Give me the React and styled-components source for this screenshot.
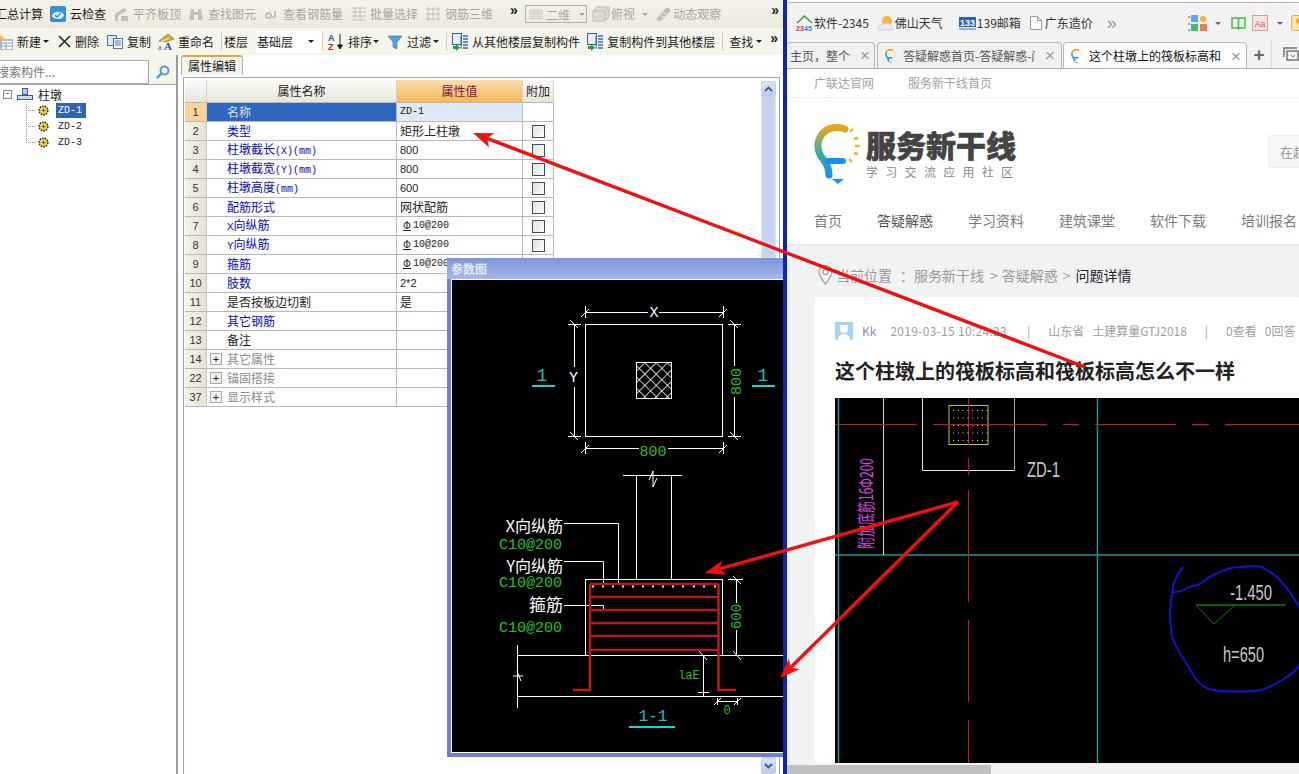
import React from 'react';
import styled, { createGlobalStyle } from 'styled-components';

const cjk = '"Noto Sans CJK SC", "Liberation Sans", sans-serif';
const mono = '"Liberation Mono", "Noto Sans CJK SC", monospace';
const sans = '"Liberation Sans", sans-serif';

const GlobalStyle = createGlobalStyle`
  html, body { margin: 0; padding: 0; background: #fff; overflow: hidden; }
  * { box-sizing: border-box; }
  body { font-family: ${cjk}; font-size: 12px; color: #222; }
  svg { flex: none; }
`;

const Page = styled.div`
  position: relative;
  display: flex;
  width: 1299px;
  height: 774px;
  overflow: hidden;
`;

/* ---------- left: the desktop program ---------- */

const AppWindow = styled.div`
  position: relative;
  width: 783px;
  height: 774px;
  flex: none;
  display: flex;
  flex-direction: column;
  overflow: hidden;
  background: #fff;
`;

const Divider = styled.div`
  width: 4px;
  flex: none;
  background: #0b27a6;
`;

const ToolRow = styled.div`
  display: flex;
  align-items: center;
  height: ${(p) => p.$h}px;
  flex: none;
  background: ${(p) => p.$bg};
  white-space: nowrap;
  overflow: hidden;
`;

const ToolItem = styled.div`
  display: flex;
  align-items: center;
  flex: none;
  gap: ${(p) => (p.$gap === undefined ? 4 : p.$gap)}px;
  margin-left: ${(p) => p.$ml || 0}px;
  color: ${(p) => (p.$off ? '#a9a79c' : '#1c1c1c')};
  line-height: 1;
`;

const Caret = styled.span`
  width: 0;
  height: 0;
  flex: none;
  margin-left: ${(p) => p.$ml || 0}px;
  border-left: 3px solid transparent;
  border-right: 3px solid transparent;
  border-top: 3px solid ${(p) => p.$c || '#222'};
`;

const More = styled.span`
  flex: none;
  width: 10px;
  margin-left: ${(p) => p.$ml || 0}px;
  margin-top: ${(p) => (p.$flat ? 0 : -8)}px;
  font: bold ${(p) => (p.$flat ? 18 : 14)}px/1 ${sans};
  color: ${(p) => (p.$flat ? '#999' : '#222')};
  font-weight: ${(p) => (p.$flat ? 400 : 700)};
`;

const ToolSep = styled.span`
  width: 1px;
  height: 18px;
  flex: none;
  margin-left: ${(p) => p.$ml || 0}px;
  background: #cfccbd;
`;

const ViewSelect = styled.div`
  display: flex;
  align-items: center;
  flex: none;
  width: 62px;
  height: 18px;
  margin-left: ${(p) => p.$ml || 0}px;
  padding-left: 3px;
  border: 1px solid #b5b3a8;
  color: #a9a79c;
  gap: 3px;
`;

const FloorSelect = styled.div`
  display: flex;
  align-items: center;
  flex: none;
  width: 66px;
  height: 22px;
  margin-left: ${(p) => p.$ml || 0}px;
  padding-left: 1px;
  background: #fff;
  justify-content: space-between;
  padding-right: 8px;
`;

const AppBody = styled.div`
  flex: 1;
  min-height: 0;
  display: flex;
`;

const TreePane = styled.div`
  width: 178px;
  flex: none;
  display: flex;
  flex-direction: column;
  border-right: 2px solid #9c9c94;
  background: #fff;
`;

const SearchRow = styled.div`
  display: flex;
  height: 30px;
  padding-top: 5px;
  background: #f6f5ec;
  border-bottom: 1px solid #a9a9a0;
`;

const SearchInput = styled.div`
  width: 150px;
  height: 24px;
  margin-left: -1px;
  border: 1px solid #a4abb5;
  background: #fff;
  color: #777;
  text-indent: -3px;
  line-height: 22px;
  overflow: hidden;
`;

const SearchButton = styled.div`
  flex: 1;
  display: flex;
  align-items: center;
  justify-content: center;
`;

const Tree = styled.div`
  padding-top: 1px;
`;

const TreeRoot = styled.div`
  display: flex;
  align-items: center;
  height: 16px;
  padding-left: 3px;
  gap: 5px;
`;

const Expander = styled.span`
  display: flex;
  align-items: center;
  justify-content: center;
  width: 9px;
  height: 9px;
  flex: none;
  border: 1px solid #888;
  background: #fff;
  font: 9px/1 ${mono};
  color: #222;
`;

const TreeLeaf = styled.div`
  display: flex;
  align-items: center;
  height: 16px;
  padding-left: 38px;
  gap: 7px;
  background-image:
    repeating-linear-gradient(to right, #999 0 1px, transparent 1px 2px),
    repeating-linear-gradient(to bottom, #999 0 1px, transparent 1px 2px);
  background-size: 10px 1px, 1px ${(p) => (p.$last ? '50%' : '100%')};
  background-position: 26px 50%, 26px 0;
  background-repeat: no-repeat;
`;

const LeafLabel = styled.span`
  padding: 1px 2px;
  font: 10px/13px ${mono};
  color: ${(p) => (p.$sel ? '#fff' : '#222')};
  background: ${(p) => (p.$sel ? '#3163b5' : 'transparent')};
  width: 30px;
`;

const PropsPane = styled.div`
  flex: 1;
  min-width: 0;
  display: flex;
  flex-direction: column;
  padding: 0 3px;
`;

const TabStrip = styled.div`
  display: flex;
  height: 23px;
  flex: none;
  margin-left: 2px;
  border-bottom: 1px solid #9aa6b5;
`;

const PaneTab = styled.div`
  width: 62px;
  height: 20px;
  margin-left: -2px;
  display: flex;
  align-items: center;
  justify-content: center;
  background: #f5f4ec;
  border: 1px solid #b5b3a8;
  border-top: 2px solid #e8a33d;
  border-bottom: none;
  border-radius: 3px 3px 0 0;
  line-height: 1;
`;

const PropsFrame = styled.div`
  flex: 1;
  min-height: 0;
  display: flex;
  justify-content: space-between;
  margin-left: 2px;
  padding-left: 1px;
  border-left: 1px solid #9aa6b5;
  border-right: 1px solid #9aa6b5;
`;

const PropGrid = styled.div`
  display: grid;
  grid-template-columns: 22px 190px 126px 31px;
  grid-template-rows: 23px repeat(16, 19px);
  align-self: flex-start;
  margin-top: 2px;
`;

const HeadCell = styled.div`
  display: flex;
  align-items: center;
  justify-content: center;
  line-height: 1;
  color: ${(p) => (p.$hot ? '#7b1540' : '#222')};
  background: ${(p) =>
    p.$hot
      ? 'linear-gradient(#f9dfae, #f3b65c)'
      : 'linear-gradient(#fbfbf6, #e8e5d8)'};
  border-right: 1px solid #d6d3c5;
  border-bottom: 1px solid #b9b9b0;
`;

const NumCell = styled.div`
  display: flex;
  align-items: center;
  justify-content: center;
  font: 11px/1 ${sans};
  color: #333;
  background: ${(p) =>
    p.$sel ? '#fbd398' : 'linear-gradient(to right, #f6f4ea, #e6e3d5)'};
  border-bottom: 1px solid #b9b9b0;
  border-right: 1px solid #c8c8c0;
`;

const NameCell = styled.div`
  display: flex;
  align-items: center;
  padding-left: ${(p) => (p.$group ? 3 : 20)}px;
  gap: 5px;
  line-height: 1;
  white-space: nowrap;
  color: ${(p) => {
    if (p.$sel) return '#dfe6f5';
    if (p.$kind === 'blue') return '#0808b8';
    if (p.$kind === 'grey') return '#8a8a8a';
    return '#1c1c1c';
  }};
  background: ${(p) => (p.$sel ? '#2f66bf' : '#fff')};
  border-bottom: 1px solid #b9b9b0;
  border-right: 1px solid #b9b9b0;
`;

const ValueCell = styled.div`
  display: flex;
  align-items: center;
  padding-left: 3px;
  line-height: 1;
  white-space: nowrap;
  background: ${(p) => (p.$sel ? '#dfe8f5' : '#fff')};
  border-bottom: 1px solid #b9b9b0;
  border-right: 1px solid #b9b9b0;
`;

const ExtraCell = styled.div`
  display: flex;
  align-items: center;
  justify-content: center;
  border-bottom: 1px solid #b9b9b0;
  border-right: 1px solid #b9b9b0;
`;

const CheckBox = styled.span`
  width: 13px;
  height: 13px;
  border: 1px solid #35506e;
  background: linear-gradient(135deg, #e4e4de, #fbfbf8);
`;

const Mono = styled.span`
  font: ${(p) => p.$size || 10}px/1 ${mono};
`;

const Digits = styled.span`
  font: 11px/1 ${sans};
`;

const GroupBox = styled.span`
  display: flex;
  align-items: center;
  justify-content: center;
  width: 12px;
  height: 12px;
  flex: none;
  border: 1px solid #aaa;
  color: #222;
  background: #f2f1ea;
  font: 11px/1 ${sans};
`;

const VScroll = styled.div`
  width: 15px;
  margin-right: 3px;
  margin-top: 3px;
  display: flex;
  flex-direction: column;
  flex: none;
`;

const ScrollBtn = styled.div`
  height: 16px;
  flex: none;
  display: flex;
  align-items: center;
  justify-content: center;
  background: linear-gradient(#dbe5f6, #b9cbea);
  border: 1px solid #c3d0e6;
  border-radius: 2px;
`;

const ScrollTrack = styled.div`
  flex: 1;
  background: #c6d6f0;
  border-left: 1px solid #dbe5f6;
  border-right: 1px solid #dbe5f6;
`;

/* floating dialog, sits over the property table */
const ParamWindow = styled.div`
  position: absolute;
  left: 447px;
  top: 258px;
  width: 337px;
  height: 499px;
  display: flex;
  flex-direction: column;
  background: #6f81cb;
  padding: 0 0 4px 4px;
`;

const ParamTitle = styled.div`
  height: 21px;
  flex: none;
  display: flex;
  align-items: center;
  font-weight: 700;
  line-height: 1;
  color: #e4e9f8;
  margin-left: -4px;
  padding-left: 4px;
  background: linear-gradient(#7d95d9, #a6b9e8);
`;

const ParamCanvas = styled.div`
  flex: 1;
  min-height: 0;
  background: #000;
  border: 1px solid #fff;
`;

const Drawing = styled.svg`
  display: block;
`;

const CadText = styled.text`
  font-family: ${(p) => (p.$cjk ? cjk : p.$thin ? sans : mono)};
  font-size: ${(p) => p.$size || 15}px;
  fill: ${(p) => p.$c || '#fff'};
  text-anchor: ${(p) => p.$anchor || 'middle'};
`;

/* ---------- right: the browser ---------- */

const Browser = styled.div`
  flex: 1;
  min-width: 0;
  display: flex;
  flex-direction: column;
  overflow: hidden;
  background: #fff;
`;

const BookmarkBar = styled.div`
  height: 41px;
  flex: none;
  display: flex;
  align-items: center;
  background: #f2f2f2;
  border-top: 1px solid #b9b9b9;
  margin-top: 2px;
  margin-bottom: -2px;
  padding-left: 9px;
  white-space: nowrap;
  overflow: hidden;
`;

const Bookmark = styled.div`
  display: flex;
  align-items: center;
  flex: none;
  margin-left: ${(p) => p.$ml || 0}px;
  gap: ${(p) => (p.$gap === undefined ? 1 : p.$gap)}px;
  color: #333;
  line-height: 1;
`;

const TabBar = styled.div`
  height: 28px;
  flex: none;
  display: flex;
  align-items: flex-end;
  background: #f2f2f2;
  border-bottom: 1px solid #b3b3b3;
  white-space: nowrap;
  overflow: hidden;
`;

const BrowserTab = styled.div`
  display: flex;
  align-items: center;
  flex: none;
  width: ${(p) => p.$w}px;
  height: 27px;
  margin-left: ${(p) => p.$ml || 0}px;
  margin-bottom: -1px;
  padding-left: ${(p) => p.$pl}px;
  background: ${(p) => (p.$active ? '#fff' : '#f0f0f0')};
  border: 1px solid #b8b8b8;
  border-bottom: ${(p) => (p.$active ? 'none' : '1px solid #b3b3b3')};
  border-radius: 4px 4px 0 0;
  color: ${(p) => (p.$active ? '#111' : '#555')};
  line-height: 1;
`;

const TabTitle = styled.span`
  display: block;
  width: ${(p) => p.$w}px;
  overflow: hidden;
  margin-left: ${(p) => p.$ml || 0}px;
  flex: none;
`;

const TabClose = styled.span`
  flex: none;
  margin-left: ${(p) => p.$ml}px;
  font: 17px/1 ${sans};
  color: #999;
`;

const PlusTab = styled.span`
  flex: none;
  width: 25px;
  height: 27px;
  display: flex;
  align-items: center;
  justify-content: center;
  font: bold 19px/1 ${sans};
  color: #666;
  border-right: 1px solid #d8d8d8;
`;

const TabTool = styled.span`
  flex: none;
  align-self: center;
  margin-left: 11px;
  display: flex;
`;

const SubNav = styled.div`
  height: 29px;
  flex: none;
  display: flex;
  align-items: center;
  gap: 34px;
  padding-left: 27px;
  color: #a2a2a2;
  line-height: 1;
  border-bottom: 1px solid #f2f2f2;
`;

const LogoRow = styled.div`
  height: 100px;
  flex: none;
  display: flex;
  padding: 26px 0 0 27px;
  overflow: hidden;
`;

const LogoWords = styled.div`
  margin-left: 6px;
  width: 154px;
  flex: none;
  display: flex;
  flex-direction: column;
`;

const LogoName = styled.div`
  font-size: 30px;
  font-weight: 900;
  line-height: 36px;
  color: #444;
  margin-top: 2px;
  white-space: nowrap;
  -webkit-text-stroke: 0.6px #444;
`;

const LogoSlogan = styled.div`
  font-size: 12px;
  line-height: 14px;
  margin-top: 3px;
  letter-spacing: 7.3px;
  color: #8b8b8b;
  white-space: nowrap;
`;

const SiteSearch = styled.div`
  width: 80px;
  height: 33px;
  flex: none;
  margin: 11px 0 0 248px;
  padding-left: 11px;
  display: flex;
  align-items: center;
  background: #f6f6f6;
  border: 1px solid #eee;
  border-radius: 3px;
  color: #999;
  font-size: 13px;
`;

const MainNav = styled.div`
  height: 46px;
  flex: none;
  display: flex;
  align-items: center;
  gap: 35px;
  padding: 0 0 2px 27px;
  font-size: 14px;
  line-height: 1;
  white-space: nowrap;
`;

const NavLink = styled.span`
  flex: none;
  color: ${(p) => (p.$active ? '#555' : '#7b7b7b')};
`;

const Content = styled.div`
  flex: 1;
  min-height: 0;
  display: flex;
  flex-direction: column;
  background: #f1f2f4;
  box-shadow: inset 0 1px 2px #e4e4e4;
`;

const Crumbs = styled.div`
  height: 53px;
  flex: none;
  display: flex;
  align-items: center;
  padding: 8px 0 0 31px;
  font-size: 14px;
  line-height: 1;
  white-space: nowrap;
`;

const CrumbText = styled.span`
  flex: none;
  margin-left: ${(p) => p.$ml || 0}px;
  color: ${(p) => (p.$current ? '#222' : '#9a9a9a')};
`;

const Card = styled.div`
  flex: 1;
  min-height: 0;
  margin-left: 28px;
  padding: 25px 0 0 20px;
  background: #fff;
  display: flex;
  flex-direction: column;
  overflow: hidden;
`;

const MetaRow = styled.div`
  height: 18px;
  flex: none;
  display: flex;
  align-items: center;
  font-size: 12px;
  line-height: 1;
  white-space: nowrap;
`;

const MetaText = styled.span`
  flex: none;
  margin-left: ${(p) => p.$ml || 0}px;
  color: ${(p) => p.$c || '#a0a0a0'};
  letter-spacing: ${(p) => p.$track || 0}px;
`;

const QuestionTitle = styled.h1`
  margin: 18px 0 14px;
  height: 26px;
  flex: none;
  font-size: 20px;
  line-height: 26px;
  font-weight: 700;
  color: #222;
  white-space: nowrap;
`;

const CadShot = styled.svg`
  display: block;
  flex: none;
  background: #000;
`;

const HScroll = styled.div`
  height: 11px;
  flex: none;
  background: #f1f1f1;
  padding-top: 2px;
`;

const HThumb = styled.div`
  width: 204px;
  height: 9px;
  background: #c1c1c1;
`;

const Annotations = styled.svg`
  position: absolute;
  left: 0;
  top: 0;
  pointer-events: none;
`;

/* ---------- drawings ---------- */

const grey = '#c2c0b4';

const CloudIcon = () => (
  <svg width="16" height="16" viewBox="0 0 16 16">
    <rect width="16" height="16" rx="2" fill="#2f93d6" />
    <path d="M2 10c1-4 5-5 7-4 2 0 4 1 5 3-1 3-3 4-6 4-3 0-5-1-6-3z" fill="#e8f5fd" />
    <path d="M5 9l2 2 4-4" stroke="#2f93d6" strokeWidth="1.4" fill="none" />
  </svg>
);

const HouseIcon = () => (
  <svg width="16" height="16" viewBox="0 0 16 16" fill={grey}>
    <path d="M1 8l9-6 3 2-9 6v5H1z" />
    <rect x="7" y="10" width="7" height="5" />
  </svg>
);

const BinocularIcon = () => (
  <svg width="16" height="16" viewBox="0 0 16 16" fill={grey}>
    <path d="M3 3h3v3h4V3h3l2 11h-5V9H6v5H1z" />
  </svg>
);

const GlassesIcon = () => (
  <svg width="16" height="16" viewBox="0 0 16 16" fill="none" stroke={grey} strokeWidth="2">
    <circle cx="4.5" cy="9.5" r="2.5" />
    <path d="M11 5v5a2 2 0 0 1-3 1" />
  </svg>
);

const GridIcon = ({ dense }) => (
  <svg width="16" height="16" viewBox="0 0 16 16" fill="none" stroke={grey}>
    <path d={dense ? 'M1 2h14M1 6h14M1 10h14M1 14h14M4 2v12M9 2v12' : 'M1 3h14M1 13h14M3 1v14M8 1v14M13 1v14M1 8h14'} />
  </svg>
);

const CubeIcon = () => (
  <svg width="18" height="18" viewBox="0 0 18 18" fill="#dddbcf" stroke={grey}>
    <path d="M1 6l4-4h12v10l-4 4H1z" />
    <path d="M1 6h12v10M13 6l4-4" fill="none" />
  </svg>
);

const OrbitIcon = () => (
  <svg width="16" height="16" viewBox="0 0 16 16" fill={grey}>
    <path d="M1 12l9-10c3-1 5 1 4 4L5 15c-3 1-5-1-4-3z" />
    <path d="M4 9l5 4M7 6l5 4" stroke="#eeede2" fill="none" />
  </svg>
);

const NewIcon = () => (
  <svg width="15" height="16" viewBox="0 0 15 16">
    <rect x="3" y="6" width="12" height="10" fill="#fff" stroke="#5a7fa8" />
    <path d="M3 9h12M3 12h12M8 9v7" stroke="#7fa0c4" />
    <path d="M3 0l1 3 3 1-3 1-1 3-1-3-3-1 3-1z" fill="#f2b632" />
  </svg>
);

const CrossIcon = () => (
  <svg width="13" height="13" viewBox="0 0 13 13" stroke="#222" strokeWidth="1.6">
    <path d="M1 1l11 11M12 1L1 12" />
  </svg>
);

const CopyIcon = () => (
  <svg width="16" height="14" viewBox="0 0 16 14">
    <rect x="0.5" y="0.5" width="9" height="10" fill="#dbe8f7" stroke="#4a78ae" />
    <rect x="6.5" y="3.5" width="9" height="10" fill="#fff" stroke="#4a78ae" />
    <path d="M8 6h6M8 8h6M8 10h6" stroke="#4a78ae" />
  </svg>
);

const RenameIcon = () => (
  <svg width="17" height="18" viewBox="0 0 17 18">
    <path d="M1 8l9-7 6 5-9 3z" fill="#d9a93a" stroke="#8a6a1e" strokeWidth="0.6" />
    <path d="M3 9l8-4" stroke="#fff" />
    <text x="0" y="17" fontSize="8" fontFamily="Liberation Serif, serif" fill="#555">a</text>
    <text x="6" y="17" fontSize="11" fontFamily="Liberation Serif, serif" fontWeight="700" fill="#2d4e8f">A</text>
  </svg>
);

const SortIcon = () => (
  <svg width="16" height="18" viewBox="0 0 16 18">
    <text x="0" y="8" fontSize="9" fontFamily="Liberation Sans, sans-serif" fontWeight="700" fill="#2d4e8f">A</text>
    <text x="0" y="17" fontSize="9" fontFamily="Liberation Sans, sans-serif" fontWeight="700" fill="#b3262c">Z</text>
    <path d="M12 1v14M9.5 12l2.5 4 2.5-4z" stroke="#222" fill="#222" />
  </svg>
);

const FilterIcon = () => (
  <svg width="14" height="14" viewBox="0 0 14 14">
    <path d="M0 1h14L9 7v7L5 12V7z" fill="#4fa0e6" stroke="#2f6fae" strokeWidth="0.6" />
  </svg>
);

const FloorCopyIcon = () => (
  <svg width="16" height="18" viewBox="0 0 16 18">
    <rect x="0.5" y="0.5" width="9" height="11" fill="#e6eef8" stroke="#3a5f95" />
    <path d="M11 3h5M11 6h5M11 9h5M11 12h5M11 15h5" stroke="#2f6fb8" strokeWidth="1.4" />
    <path d="M9 3v13" stroke="#2f6fb8" />
    <path d="M1 13h3v-2l4 3.5L4 18v-2H1z" fill="#2f9a3c" />
  </svg>
);

const SearchGlass = () => (
  <svg width="14" height="14" viewBox="0 0 14 14" fill="none">
    <circle cx="8.5" cy="5.5" r="4" stroke="#4f9bd6" strokeWidth="2" />
    <path d="M5.5 8.5L1 13" stroke="#4f9bd6" strokeWidth="2.4" />
  </svg>
);

const PierIcon = () => (
  <svg width="16" height="12" viewBox="0 0 16 12">
    <rect x="5.5" y="0.5" width="5" height="6" fill="#b7c9ea" stroke="#3b5aa0" />
    <rect x="0.5" y="7.5" width="15" height="4" fill="#d9d9d9" stroke="#3b5aa0" />
  </svg>
);

const GearIcon = () => (
  <svg width="11" height="11" viewBox="0 0 11 11">
    <circle cx="5.5" cy="5.5" r="4.3" fill="#f4e23b" stroke="#222" strokeWidth="1.6" strokeDasharray="1.6 1" />
    <path d="M3.5 5.5h4M5.5 3.5v4" stroke="#6b5a00" />
  </svg>
);

const RebarMark = () => (
  <svg width="10" height="10" viewBox="0 0 10 10" fill="none" stroke="#222">
    <circle cx="5" cy="4.5" r="3" />
    <path d="M5 0v8M1 9.5h8" />
  </svg>
);

const Chevron = ({ down }) => (
  <svg width="9" height="6" viewBox="0 0 9 6" fill="none" stroke="#3b5a8e" strokeWidth="1.8">
    <path d={down ? 'M1 1l3.5 3.5L8 1' : 'M1 5l3.5-3.5L8 5'} />
  </svg>
);

const Bulb = ({ w = 46, h = 60 }) => (
  <svg width={w} height={h} viewBox="0 0 46 60">
    <defs>
      <linearGradient id="bulbGrad" x1="0" y1="0" x2="0" y2="1">
        <stop offset="0" stopColor="#e8a81a" />
        <stop offset="0.5" stopColor="#3cb09a" />
        <stop offset="1" stopColor="#1b8ff0" />
      </linearGradient>
    </defs>
    <path
      d="M31 5C24 2 14 3 8 10C2 18 3 28 9 35C13 40 15 44 15 51"
      fill="none"
      stroke="url(#bulbGrad)"
      strokeWidth="7"
      strokeLinecap="round"
    />
    <path d="M14 37H29" stroke="#1b8ff0" strokeWidth="6" strokeLinecap="round" />
    <path d="M18 55H30L24 60z" fill="#1b8ff0" />
    <path d="M36 8l3-3M40 15l4-1M41 22h5M40 29l4 1M35 35l3 3" stroke="#eeb22a" strokeWidth="2.4" />
  </svg>
);

const LogoHouse = () => (
  <svg width="17" height="16" viewBox="0 0 17 16">
    <path d="M1 8l7.500-7 7.500 7" fill="none" stroke="#4c9a3c" strokeWidth="1.6" />
    <text x="0" y="15.500" fontSize="7" fontWeight="700" fontFamily="Liberation Sans, sans-serif" fill="#c8372f">23</text>
    <text x="8" y="15.500" fontSize="7" fontWeight="700" fontFamily="Liberation Sans, sans-serif" fill="#2f7fd0">45</text>
  </svg>
);

const WeatherIcon = () => (
  <svg width="17" height="16" viewBox="0 0 17 16">
    <circle cx="10" cy="6" r="5" fill="#f6b73c" />
    <path d="M1 15c0-4 3-6 6-6 3-2 8 0 9 6z" fill="#e9edf2" stroke="#c9ced6" />
  </svg>
);

const MailIcon = () => (
  <svg width="17" height="13" viewBox="0 0 17 13">
    <rect width="17" height="10" fill="#2a62b5" />
    <rect y="11" width="17" height="2" fill="#8fb4e6" />
    <text x="8.500" y="9" textAnchor="middle" fontSize="9" fontWeight="700" fontFamily="Liberation Sans, sans-serif" fill="#fff">133</text>
  </svg>
);

const DocIcon = () => (
  <svg width="12" height="14" viewBox="0 0 12 14" fill="#fff" stroke="#999">
    <path d="M0.500 0.500h7l4 4v9h-11z" />
    <path d="M7.500 0.500v4h4" fill="none" />
  </svg>
);

const AppsIcon = () => (
  <svg width="16" height="16" viewBox="0 0 16 16">
    <rect width="7" height="7" fill="#57a9ee" />
    <rect x="9" y="1" width="6" height="6" fill="#f1b52f" rx="3" />
    <rect y="9" width="7" height="7" fill="#3fbf6a" />
    <rect x="9" y="9" width="7" height="7" fill="#ef7a5a" />
  </svg>
);

const BookIcon = () => (
  <svg width="15" height="14" viewBox="0 0 15 14" fill="#e8f8e4" stroke="#45b54a" strokeWidth="1.4">
    <path d="M1 2h5.500l1 1 1-1H14v10H8.500l-1 1-1-1H1z" />
    <path d="M7.500 3v9" />
  </svg>
);

const DictIcon = () => (
  <svg width="16" height="16" viewBox="0 0 16 16">
    <rect x="0.500" y="0.500" width="15" height="15" fill="#fbe6e4" stroke="#e29a94" />
    <text x="8" y="11.500" textAnchor="middle" fontSize="9" fontFamily="Liberation Sans, sans-serif" fill="#d8564c">Aa</text>
  </svg>
);

const PluginIcon = () => (
  <svg width="16" height="16" viewBox="0 0 16 16">
    <rect x="0.500" y="0.500" width="15" height="15" rx="2" fill="#fbe3a6" stroke="#e5b23c" />
    <circle cx="8" cy="6" r="3" fill="#f0a63a" />
  </svg>
);

const WindowsIcon = () => (
  <svg width="16" height="15" viewBox="0 0 16 15" fill="none" stroke="#777" strokeWidth="1.500">
    <path d="M1 10V1h13" />
    <path d="M4 13V4h11v9z" />
    <path d="M8 8l2 2 2-2" strokeWidth="1" />
  </svg>
);

const PinIcon = () => (
  <svg width="15" height="20" viewBox="0 0 15 20" fill="none" stroke="#9a9a9a" strokeWidth="1.2">
    <path d="M7.500 19C4 14 1 11 1 7a6.500 6.500 0 0 1 13 0c0 4-3 7-6.500 12z" />
    <circle cx="7.500" cy="7" r="2.500" />
  </svg>
);

const AvatarIcon = () => (
  <svg width="18" height="18" viewBox="0 0 18 18">
    <rect width="18" height="18" rx="1" fill="#a9d2f7" />
    <circle cx="9" cy="7" r="4" fill="#fff" />
    <path d="M5 3l2 2M13 3l-2 2" stroke="#fff" strokeWidth="1.500" />
    <path d="M3 18c0-4 3-6 6-6s6 2 6 6z" fill="#fff" />
  </svg>
);

function ParamDrawing() {
  const dots = [592, 602, 612, 622, 632, 642, 652, 662, 672, 682, 693, 703, 714];
  const hoops = [597, 610, 623, 636, 650];
  return (
    <Drawing width="331" height="472" viewBox="452 280 331 472">
      <defs>
        <pattern id="hatch" width="8" height="8" patternUnits="userSpaceOnUse" patternTransform="rotate(45)">
          <path d="M0 0H8M0 0V8" stroke="#fff" strokeWidth="1.600" />
        </pattern>
      </defs>
      <g fill="none" stroke="#fff" strokeWidth="1">
        <rect x="585.500" y="324.500" width="137" height="112" />
        <rect x="636.500" y="362.500" width="35" height="36" fill="url(#hatch)" />
        <path d="M585 312.500H648M659 312.500H723M585.500 306V318M723.500 306V318M581 317L589 309M719 317L727 309" />
        <path d="M574.500 324V367M574.500 387V436M568 324.500H581M568 436.500H581M570 320L578 328M570 432L578 440" />
        <path d="M734.500 324V366M734.500 397V436M728 324.500H741M728 436.500H741M730 320L738 328M730 432L738 440" />
        <path d="M585 448.500H639M668 448.500H723M585.500 442V454M723.500 442V454M581 453L589 445M719 453L727 445" />

        <path d="M623 475.500H682M636.500 475V579M671.500 475V579M649 480L653 471V487L657 478" />
        <rect x="585.500" y="579.500" width="137" height="76" />
        <path d="M518 655.500H783M518 696.500H783M517.500 645V708M513 676H523M517 671L521 681" />
        <path d="M564 523.500H618.500V584M564 561.500H603.500V585M564 605.500H603.500V610" />
        <path d="M736.500 579V603M736.500 630V655M728 579.500H743M733 576L741 584M733 651L741 660" />
        <path d="M703.500 655V696M698 655.500H709M698 692.500H709M699 651L707 660" />
        <path d="M717 701.500H738M717.500 698V705M737.500 698V705M714 705L721 698M734 705L741 698" />
      </g>

      <g fill="none" stroke="#b5181e" strokeWidth="2.400">
        <path d="M590 584H718.500" />
        <path d="M590 584V690H573" stroke="#c8161c" />
        <path d="M718.500 584V690H736" stroke="#c8161c" />
        {hoops.map((y) => (
          <path key={y} d={`M590 ${y}H718.500`} />
        ))}
      </g>
      {dots.map((x) => (
        <rect key={x} x={x} y="585.500" width="2" height="2" fill="#ffe45a" />
      ))}

      <path d="M532 386H555M752 386H775" stroke="#19d3d3" strokeWidth="2" />
      <path d="M629 727H675" stroke="#19d3d3" strokeWidth="2" />

      <CadText x="654" y="317">X</CadText>
      <CadText x="573.500" y="382">Y</CadText>
      <CadText x="653" y="456" $c="#2dbb2d">800</CadText>
      <CadText transform="translate(741 381.500) rotate(-90)" $c="#2dbb2d">800</CadText>
      <CadText x="542" y="381" $c="#19c4c4" $size={18}>1</CadText>
      <CadText x="763" y="381" $c="#19c4c4" $size={18}>1</CadText>

      <CadText x="563" y="532" $cjk $anchor="end" $size={16}>X向纵筋</CadText>
      <CadText x="562" y="549" $c="#22c422" $anchor="end">C10@200</CadText>
      <CadText x="563" y="572" $cjk $anchor="end" $size={16}>Y向纵筋</CadText>
      <CadText x="562" y="587" $c="#22c422" $anchor="end">C10@200</CadText>
      <CadText x="563" y="611" $cjk $anchor="end" $size={17}>箍筋</CadText>
      <CadText x="562" y="632" $c="#22c422" $anchor="end">C10@200</CadText>

      <CadText transform="translate(741 616.500) rotate(-90)" $c="#2dbb2d" $size={14}>600</CadText>
      <CadText x="689" y="679" $c="#2dbb2d" $size={12}>laE</CadText>
      <CadText x="727" y="714" $c="#2dbb2d" $size={12}>0</CadText>
      <CadText x="653" y="721" $c="#19c4c4" $size={16}>1-1</CadText>
    </Drawing>
  );
}

function QuestionDrawing() {
  const spots = [];
  for (let r = 0; r < 5; r += 1) {
    for (let c = 0; c < 8; c += 1) {
      spots.push([953 + c * 4.800, 410 + r * 7.500]);
    }
  }
  return (
    <CadShot width="464" height="365" viewBox="835 398 464 365">
      <g fill="none" strokeWidth="1">
        <path d="M838.500 398V763M1097.500 398V763M835 555H1299" stroke="#169a96" strokeWidth="1.500" />
        <path d="M883.500 398V555" stroke="#d8d8d8" />
        <path d="M922.500 398V470.500H1014.500" stroke="#e8e8e8" />
        <path d="M1014.500 398V470" stroke="#aaa" />
        <rect x="949" y="405.500" width="39" height="39" stroke="#c6c628" />
        <path
          d="M835 424.500H917M933 424.500H1047M1063 424.500H1079M1095 424.500H1176M1192 424.500H1209M1225 424.500H1299"
          stroke="#d01620"
        />
        <path
          d="M968.500 398V445M968.500 458V475M968.500 490V602M968.500 620V702M968.500 720V763"
          stroke="#d01620"
        />
        <path d="M1196 605H1286" stroke="#0a7d0a" strokeWidth="1.500" />
        <path d="M1196 605L1214 624L1235 605" stroke="#0a7d0a" />
        <path
          d="M1183 567C1177 574 1173 582 1172 593C1169 610 1170 626 1172 636C1175 648 1185 660 1195 678C1201 686 1208 689 1212 690C1225 692 1250 692 1262 690C1272 686 1280 682 1285 678C1292 675 1296 670 1300 664"
          stroke="#1212cc"
          strokeWidth="2"
        />
        <path
          d="M1172 593C1176 591 1181 592 1184 590C1187 587 1192 586 1198 585C1205 580 1212 575 1218 573C1227 569 1235 566 1242 567C1250 566 1257 566 1262 567C1268 571 1274 574 1278 578C1284 584 1288 590 1292 595C1295 600 1297 604 1300 608"
          stroke="#1212cc"
          strokeWidth="2"
        />
      </g>
      {spots.map(([x, y]) => (
        <rect key={`${x}-${y}`} x={x} y={y} width="1" height="1" fill="#e6e65a" />
      ))}
      <CadText x="1027" y="477" $thin $anchor="start" $c="#c8c8c8" $size={22} textLength="33" lengthAdjust="spacingAndGlyphs">
        ZD-1
      </CadText>
      <CadText x="1230" y="600" $thin $anchor="start" $c="#c8c8c8" $size={22} textLength="42" lengthAdjust="spacingAndGlyphs">
        -1.450
      </CadText>
      <CadText x="1223" y="662" $thin $anchor="start" $c="#c8c8c8" $size={22} textLength="41" lengthAdjust="spacingAndGlyphs">
        h=650
      </CadText>
      <CadText
        transform="translate(873 549) rotate(-90)"
        $cjk
        $anchor="start"
        $c="#d24bdc"
        $size={18}
        textLength="91"
        lengthAdjust="spacingAndGlyphs"
      >
        附加底筋16Φ200
      </CadText>
    </CadShot>
  );
}

/* red arrows the poster drew across both windows */
function RedArrow({ from, to }) {
  const dx = to[0] - from[0];
  const dy = to[1] - from[1];
  const len = Math.hypot(dx, dy);
  const ux = dx / len;
  const uy = dy / len;
  const bx = to[0] - ux * 20;
  const by = to[1] - uy * 20;
  const nx = to[0] - ux * 15;
  const ny = to[1] - uy * 15;
  const head = [
    to,
    [bx - uy * 7.5, by + ux * 7.5],
    [nx, ny],
    [bx + uy * 7.5, by - ux * 7.5],
  ];
  return (
    <>
      <line x1={from[0]} y1={from[1]} x2={nx} y2={ny} stroke="#f01010" strokeWidth="3.4" />
      <polygon points={head.map((p) => p.join(',')).join(' ')} fill="#f01010" />
    </>
  );
}

/* ---------- data ---------- */

const Rebar = () => (
  <ToolItem $gap={1} $ml={2}>
    <RebarMark />
    <Mono>10@200</Mono>
  </ToolItem>
);

const propRows = [
  { no: 1, name: '名称', value: <Mono>ZD-1</Mono>, sel: true },
  { no: 2, name: '类型', kind: 'blue', value: '矩形上柱墩' },
  { no: 3, name: <>柱墩截长<Mono>(X)(mm)</Mono></>, kind: 'blue', value: <Digits>800</Digits> },
  { no: 4, name: <>柱墩截宽<Mono>(Y)(mm)</Mono></>, kind: 'blue', value: <Digits>800</Digits> },
  { no: 5, name: <>柱墩高度<Mono>(mm)</Mono></>, kind: 'blue', value: <Digits>600</Digits> },
  { no: 6, name: '配筋形式', kind: 'blue', value: '网状配筋' },
  { no: 7, name: <><Mono $size={11}>X</Mono>向纵筋</>, kind: 'blue', value: <Rebar /> },
  { no: 8, name: <><Mono $size={11}>Y</Mono>向纵筋</>, kind: 'blue', value: <Rebar /> },
  { no: 9, name: '箍筋', kind: 'blue', value: <Rebar /> },
  { no: 10, name: '肢数', kind: 'blue', value: <Digits>2*2</Digits> },
  { no: 11, name: '是否按板边切割', value: '是' },
  { no: 12, name: '其它钢筋', kind: 'blue' },
  { no: 13, name: '备注' },
  { no: 14, name: '其它属性', kind: 'grey', group: true },
  { no: 22, name: '锚固搭接', kind: 'grey', group: true },
  { no: 37, name: '显示样式', kind: 'grey', group: true },
];

const navLinks = ['首页', '答疑解惑', '学习资料', '建筑课堂', '软件下载', '培训报名'];
const leaves = ['ZD-1', 'ZD-2', 'ZD-3'];

function App() {
  return (
    <Page>
      <GlobalStyle />
      <AppWindow>
        <ToolRow $h={28} $bg="linear-gradient(#f5f3ea, #ece9dc)">
          <ToolItem $ml={-5}>汇总计算</ToolItem>
          <ToolItem $ml={7}><CloudIcon />云检查</ToolItem>
          <ToolItem $ml={8} $off $gap={3}><HouseIcon />平齐板顶</ToolItem>
          <ToolItem $ml={7} $off><BinocularIcon />查找图元</ToolItem>
          <ToolItem $ml={8} $off $gap={3}><GlassesIcon />查看钢筋量</ToolItem>
          <ToolItem $ml={8} $off $gap={3}><GridIcon dense />批量选择</ToolItem>
          <ToolItem $ml={7} $off><GridIcon />钢筋三维</ToolItem>
          <More $ml={17}>»</More>
          <ViewSelect $ml={5}>
            <svg width="14" height="10"><rect width="14" height="10" fill="#dcdbd0" /></svg>
            二维
            <Caret $c="#a9a79c" $ml={6} />
          </ViewSelect>
          <ToolItem $ml={5} $off $gap={1}><CubeIcon />俯视<Caret $c="#a9a79c" $ml={6} /></ToolItem>
          <ToolItem $ml={8} $off $gap={1}><OrbitIcon />动态观察</ToolItem>
          <More $ml={50}>»</More>
        </ToolRow>
        <ToolRow $h={27} $bg="#f6f5ec">
          <ToolItem $ml={-2}><NewIcon />新建<Caret $ml={-2} /></ToolItem>
          <ToolItem $ml={9}><CrossIcon />删除</ToolItem>
          <ToolItem $ml={8}><CopyIcon />复制</ToolItem>
          <ToolItem $ml={7} $gap={3}><RenameIcon />重命名</ToolItem>
          <ToolSep $ml={7} />
          <ToolItem $ml={2}>楼层</ToolItem>
          <FloorSelect $ml={8}>基础层<Caret /></FloorSelect>
          <ToolSep />
          <ToolItem $ml={5}><SortIcon />排序<Caret $ml={-3} /></ToolItem>
          <ToolItem $ml={9} $gap={5}><FilterIcon />过滤<Caret $ml={-3} /></ToolItem>
          <ToolSep $ml={7} />
          <ToolItem $ml={5}><FloorCopyIcon />从其他楼层复制构件</ToolItem>
          <ToolItem $ml={7}><FloorCopyIcon />复制构件到其他楼层</ToolItem>
          <ToolSep $ml={7} />
          <ToolItem $ml={6}>查找<Caret $ml={-1} /></ToolItem>
          <More $ml={8}>»</More>
        </ToolRow>
        <AppBody>
          <TreePane>
            <SearchRow>
              <SearchInput>搜索构件...</SearchInput>
              <SearchButton><SearchGlass /></SearchButton>
            </SearchRow>
            <Tree>
              <TreeRoot>
                <Expander>-</Expander>
                <PierIcon />
                柱墩
              </TreeRoot>
              {leaves.map((leaf, i) => (
                <TreeLeaf key={leaf} $last={i === leaves.length - 1}>
                  <GearIcon />
                  <LeafLabel $sel={i === 0}>{leaf}</LeafLabel>
                </TreeLeaf>
              ))}
            </Tree>
          </TreePane>
          <PropsPane>
            <TabStrip>
              <PaneTab>属性编辑</PaneTab>
            </TabStrip>
            <PropsFrame>
              <PropGrid>
                <HeadCell />
                <HeadCell>属性名称</HeadCell>
                <HeadCell $hot>属性值</HeadCell>
                <HeadCell>附加</HeadCell>
                {propRows.map((row) => (
                  <React.Fragment key={row.no}>
                    <NumCell $sel={row.sel}>{row.no}</NumCell>
                    <NameCell $sel={row.sel} $kind={row.kind} $group={row.group}>
                      {row.group && <GroupBox>+</GroupBox>}
                      <span>{row.name}</span>
                    </NameCell>
                    <ValueCell $sel={row.sel}>{row.value}</ValueCell>
                    <ExtraCell>{!row.sel && !row.group && <CheckBox />}</ExtraCell>
                  </React.Fragment>
                ))}
              </PropGrid>
              <VScroll>
                <ScrollBtn><Chevron /></ScrollBtn>
                <ScrollTrack />
                <ScrollBtn><Chevron down /></ScrollBtn>
              </VScroll>
            </PropsFrame>
          </PropsPane>
        </AppBody>
        <ParamWindow>
          <ParamTitle>参数图</ParamTitle>
          <ParamCanvas>
            <ParamDrawing />
          </ParamCanvas>
        </ParamWindow>
      </AppWindow>
      <Divider />
      <Browser>
        <BookmarkBar>
          <Bookmark><LogoHouse />软件-2345</Bookmark>
          <Bookmark $ml={8}><WeatherIcon />佛山天气</Bookmark>
          <Bookmark $ml={16}><MailIcon />139邮箱</Bookmark>
          <Bookmark $ml={9} $gap={3}><DocIcon />广东造价</Bookmark>
          <More $ml={14} $flat>»</More>
          <More $ml={63} $flat>⋮</More>
          <Bookmark $ml={1}><AppsIcon /><Caret $c="#666" $ml={7} /></Bookmark>
          <Bookmark $ml={10}><BookIcon /></Bookmark>
          <Bookmark $ml={6}><DictIcon /><Caret $c="#666" $ml={8} /></Bookmark>
          <Bookmark $ml={8}><PluginIcon /></Bookmark>
        </BookmarkBar>
        <TabBar>
          <BrowserTab $w={89} $ml={-1} $pl={3}>
            <TabTitle $w={60}>主页，整个</TabTitle>
            <TabClose $ml={10}>×</TabClose>
          </BrowserTab>
          <BrowserTab $w={185} $ml={2} $pl={7}>
            <Bulb w={11} h={16} />
            <TabTitle $w={132} $ml={7}>答疑解惑首页-答疑解惑-问</TabTitle>
            <TabClose $ml={10}>×</TabClose>
          </BrowserTab>
          <BrowserTab $w={184} $ml={1} $active $pl={7}>
            <Bulb w={11} h={16} />
            <TabTitle $w={132} $ml={7}>这个柱墩上的筏板标高和筏板</TabTitle>
            <TabClose $ml={10}>×</TabClose>
          </BrowserTab>
          <PlusTab>+</PlusTab>
          <TabTool><WindowsIcon /></TabTool>
        </TabBar>
        <SubNav>
          <span>广联达官网</span>
          <span>服务新干线首页</span>
        </SubNav>
        <LogoRow>
          <Bulb />
          <LogoWords>
            <LogoName>服务新干线</LogoName>
            <LogoSlogan>学习交流应用社区</LogoSlogan>
          </LogoWords>
          <SiteSearch>在超</SiteSearch>
        </LogoRow>
        <MainNav>
          {navLinks.map((link) => (
            <NavLink key={link} $active={link === '答疑解惑'}>{link}</NavLink>
          ))}
        </MainNav>
        <Content>
          <Crumbs>
            <PinIcon />
            <CrumbText $ml={3}>当前位置</CrumbText>
            <CrumbText $ml={8}>：</CrumbText>
            <CrumbText>服务新干线</CrumbText>
            <CrumbText $ml={6}>&gt;</CrumbText>
            <CrumbText $ml={4}>答疑解惑</CrumbText>
            <CrumbText $ml={5}>&gt;</CrumbText>
            <CrumbText $ml={5} $current>问题详情</CrumbText>
          </Crumbs>
          <Card>
            <MetaRow>
              <AvatarIcon />
              <MetaText $ml={9} $c="#8d93a8">Kk</MetaText>
              <MetaText $ml={14} $track={0.3}>2019-03-15 10:24:23</MetaText>
              <MetaText $ml={20}>|</MetaText>
              <MetaText $ml={18}>山东省</MetaText>
              <MetaText $ml={8}>土建算量GTJ2018</MetaText>
              <MetaText $ml={18}>|</MetaText>
              <MetaText $ml={18}>0查看</MetaText>
              <MetaText $ml={8}>0回答</MetaText>
            </MetaRow>
            <QuestionTitle>这个柱墩上的筏板标高和筏板标高怎么不一样</QuestionTitle>
            <QuestionDrawing />
          </Card>
        </Content>
        <HScroll><HThumb /></HScroll>
      </Browser>
      <Annotations width="1299" height="774" viewBox="0 0 1299 774">
        <RedArrow from={[1085, 367]} to={[473, 133]} />
        <RedArrow from={[958, 502]} to={[705, 573]} />
        <RedArrow from={[958, 502]} to={[780, 678]} />
      </Annotations>
    </Page>
  );
}

export default App;
